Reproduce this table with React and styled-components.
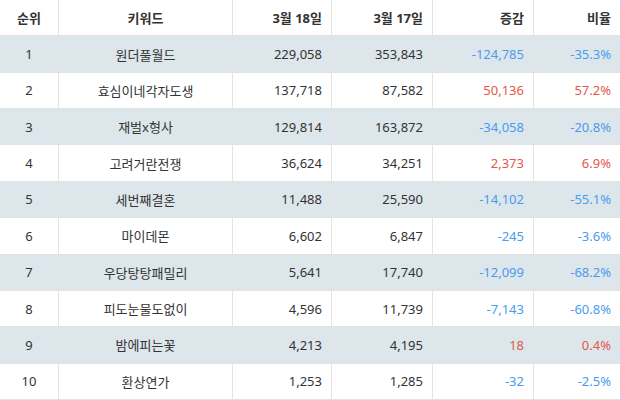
import React from 'react';
import styled, { createGlobalStyle } from 'styled-components';

const GlobalStyle = createGlobalStyle`
  html, body {
    margin: 0;
    padding: 0;
    background: #ffffff;
  }
`;

const Table = styled.div`
  width: 620px;
  height: 400px;
  display: grid;
  grid-template-columns: 59px 174px 99px 101px 101px 86px;
  grid-template-rows: repeat(11, 1fr);
  font-family: "Noto Sans", "Noto Sans CJK KR", sans-serif;
  font-size: 13px;
  color: #333;
  box-sizing: border-box;
`;

const Row = styled.div`
  display: contents;
`;

const Cell = styled.div`
  display: flex;
  align-items: center;
  justify-content: ${p => (p.$align === 'right' ? 'flex-end' : 'center')};
  padding: 0 ${p => (p.$align === 'right' ? '9px' : '0')} 0 0;
  background: ${p => (p.$shade ? '#dde6ea' : '#ffffff')};
  border-right: ${p => (p.$last ? 'none' : '1px solid #e4e4e4')};
  border-bottom: 1px solid #e2e2e2;
  font-weight: ${p => (p.$head ? 700 : 400)};
  color: ${p => (p.$tone === 'up' ? '#e5574c' : p.$tone === 'down' ? '#4a9cee' : '#333')};
  white-space: nowrap;
  box-sizing: border-box;
`;

const rows = [
  [1, '원더풀월드', '229,058', '353,843', '-124,785', '-35.3%'],
  [2, '효심이네각자도생', '137,718', '87,582', '50,136', '57.2%'],
  [3, '재벌x형사', '129,814', '163,872', '-34,058', '-20.8%'],
  [4, '고려거란전쟁', '36,624', '34,251', '2,373', '6.9%'],
  [5, '세번째결혼', '11,488', '25,590', '-14,102', '-55.1%'],
  [6, '마이데몬', '6,602', '6,847', '-245', '-3.6%'],
  [7, '우당탕탕패밀리', '5,641', '17,740', '-12,099', '-68.2%'],
  [8, '피도눈물도없이', '4,596', '11,739', '-7,143', '-60.8%'],
  [9, '밤에피는꽃', '4,213', '4,195', '18', '0.4%'],
  [10, '환상연가', '1,253', '1,285', '-32', '-2.5%'],
];

export default function App() {
  return (
    <>
      <GlobalStyle />
      <Table>
        <Row>
          <Cell $head>순위</Cell>
          <Cell $head>키워드</Cell>
          <Cell $head $align="right">3월 18일</Cell>
          <Cell $head $align="right">3월 17일</Cell>
          <Cell $head $align="right">증감</Cell>
          <Cell $head $align="right" $last>비율</Cell>
        </Row>
        {rows.map(([rank, word, a, b, diff, ratio]) => {
          const shade = rank % 2 === 1;
          const tone = diff.startsWith('-') ? 'down' : 'up';
          return (
            <Row key={rank}>
              <Cell $shade={shade}>{rank}</Cell>
              <Cell $shade={shade}>{word}</Cell>
              <Cell $shade={shade} $align="right">{a}</Cell>
              <Cell $shade={shade} $align="right">{b}</Cell>
              <Cell $shade={shade} $align="right" $tone={tone}>{diff}</Cell>
              <Cell $shade={shade} $align="right" $tone={tone} $last>{ratio}</Cell>
            </Row>
          );
        })}
      </Table>
    </>
  );
}
